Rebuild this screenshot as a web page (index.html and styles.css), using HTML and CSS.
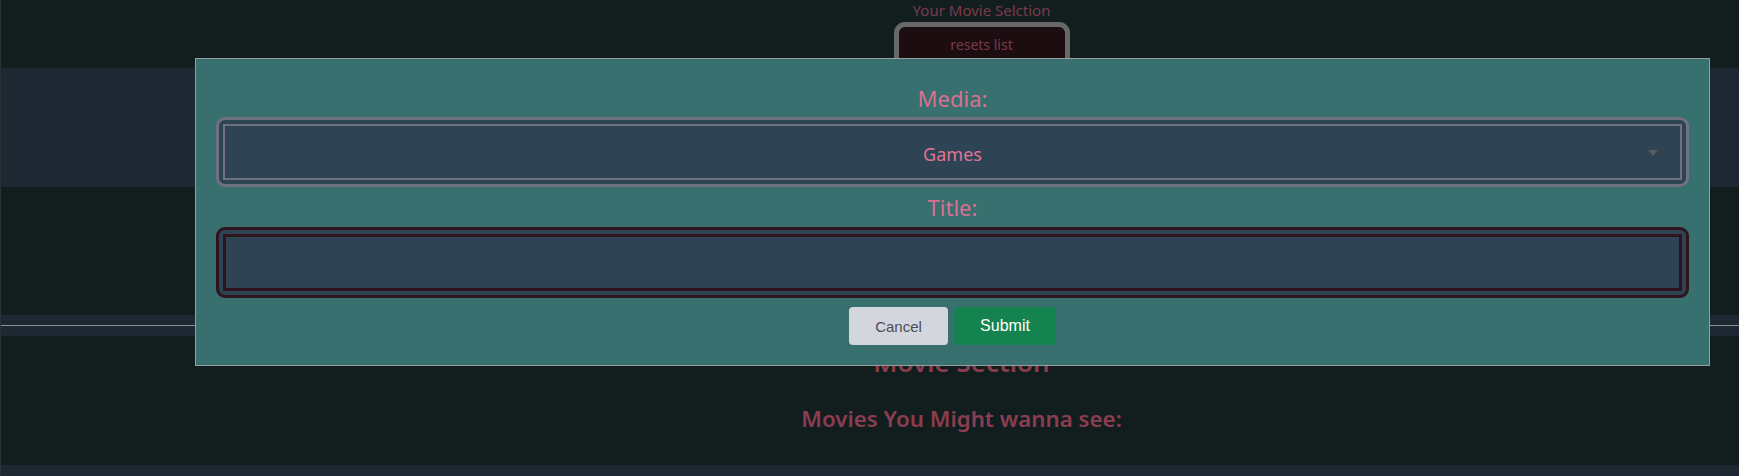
FILE: index.html
```html
<!DOCTYPE html>
<html lang="en">
<head>
<meta charset="utf-8">
<title>Movie Selection</title>
<link rel="stylesheet" href="styles.css">
</head>
<body>
<div class="page">
  <header class="top">
    <p class="selection-title">Your Movie Selction</p>
    <button class="reset-btn" type="button">resets list</button>
  </header>
  <section class="band band-main"></section>
  <section class="spacer"></section>
  <div class="divider-band"><div class="divider-line"></div></div>
  <section class="movie-section">
    <h2 class="section-title">Movie Section</h2>
    <h3 class="section-sub">Movies You Might wanna see:</h3>
  </section>
  <footer class="band band-foot"></footer>
</div>

<div class="modal">
  <form class="modal-form">
    <label class="field-label">Media:</label>
    <div class="field-frame frame-select">
      <div class="field-inner inner-select">
        <span class="select-value">Games</span>
        <span class="select-arrow"></span>
      </div>
    </div>
    <label class="field-label label-title">Title:</label>
    <div class="field-frame frame-input">
      <div class="field-inner inner-input"></div>
    </div>
    <div class="actions">
      <button class="btn btn-cancel" type="button">Cancel</button>
      <button class="btn btn-submit" type="button">Submit</button>
    </div>
  </form>
</div>
</body>
</html>
```

FILE: styles.css
```css
html, body {
  margin: 0;
  padding: 0;
  background: #121e1e;
  height: 100%;
  overflow: hidden;
}

body {
  font-family: "Noto Sans", "Open Sans", sans-serif;
}

.page {
  display: flex;
  flex-direction: column;
  border-left: 1px solid #27323a;
  min-height: 476px;
}

.top {
  height: 68px;
  display: flex;
  flex-direction: column;
  align-items: center;
  padding-left: 223px;
  box-sizing: border-box;
  overflow: visible;
}

.selection-title {
  margin: 0;
  font-size: 15px;
  line-height: 20px;
  color: #7b3a4c;
}

.reset-btn {
  margin-top: 2px;
  width: 176px;
  height: 46px;
  box-sizing: border-box;
  border: 5px solid #686868;
  border-radius: 11px 11px 0 0;
  background: #1c0d10;
  color: #7b3a4c;
  font-family: "Noto Sans", sans-serif;
  font-size: 14px;
  line-height: 18px;
  padding: 9px 0;
}

.band {
  background: #1d2832;
}

.band-main {
  height: 119px;
}

.spacer {
  height: 128px;
}

.divider-band {
  height: 21px;
  background: #1d2832;
  display: flex;
  flex-direction: column;
  justify-content: center;
}

.divider-line {
  height: 1px;
  background: #8c9096;
}

.movie-section {
  height: 129px;
  display: flex;
  flex-direction: column;
  align-items: center;
  padding-left: 183px;
  box-sizing: border-box;
}

.section-title {
  margin: 10px 0 0;
  font-size: 26px;
  line-height: 32px;
  font-weight: 600;
  color: #8a3d50;
}

.section-sub {
  margin: 26px 0 0;
  font-size: 22.3px;
  line-height: 30px;
  font-weight: 600;
  color: #8a3d50;
}

.band-foot {
  height: 11px;
}

/* Modal overlay */
.modal {
  position: fixed;
  left: 195px;
  top: 58px;
  width: 1515px;
  height: 308px;
  box-sizing: border-box;
  background: #386f6f;
  border: 1px solid #9a9d9e;
}

.modal-form {
  display: flex;
  flex-direction: column;
  padding: 24px 20px 20px;
}

.field-label {
  display: block;
  text-align: center;
  font-size: 22px;
  line-height: 30px;
  color: #dc7090;
  margin-bottom: 4px;
}

.label-title {
  margin-top: 5px;
  margin-bottom: 5px;
}

.field-frame {
  border: 3px solid #70737f;
  border-radius: 9px;
  background: #2e4455;
  padding: 4px;
}

.field-inner {
  background: #2e4455;
  box-sizing: border-box;
}

.inner-select {
  position: relative;
  height: 56px;
  border: 2px solid #70737f;
  display: flex;
  align-items: center;
  justify-content: center;
}

.select-value {
  font-size: 18px;
  color: #e07494;
  line-height: 24px;
  padding-top: 3px;
}

.select-arrow {
  position: absolute;
  right: 22px;
  top: 24px;
  width: 0;
  height: 0;
  border-left: 5px solid transparent;
  border-right: 5px solid transparent;
  border-top: 6px solid #595b5e;
}

.frame-input {
  border-color: #30141d;
}

.inner-input {
  height: 57px;
  border: 3px solid #30141d;
}

.actions {
  display: flex;
  justify-content: center;
  gap: 6px;
  margin-top: 9px;
}

.btn {
  height: 38px;
  border: none;
  border-radius: 4px;
  font-family: "Liberation Sans", Arial, sans-serif;
  cursor: pointer;
}

.btn-cancel {
  width: 99px;
  background: #d3d6dc;
  color: #4b4e5e;
  font-size: 15px;
}

.btn-submit {
  width: 102px;
  background: #15834f;
  color: #ffffff;
  font-size: 16px;
}
```
